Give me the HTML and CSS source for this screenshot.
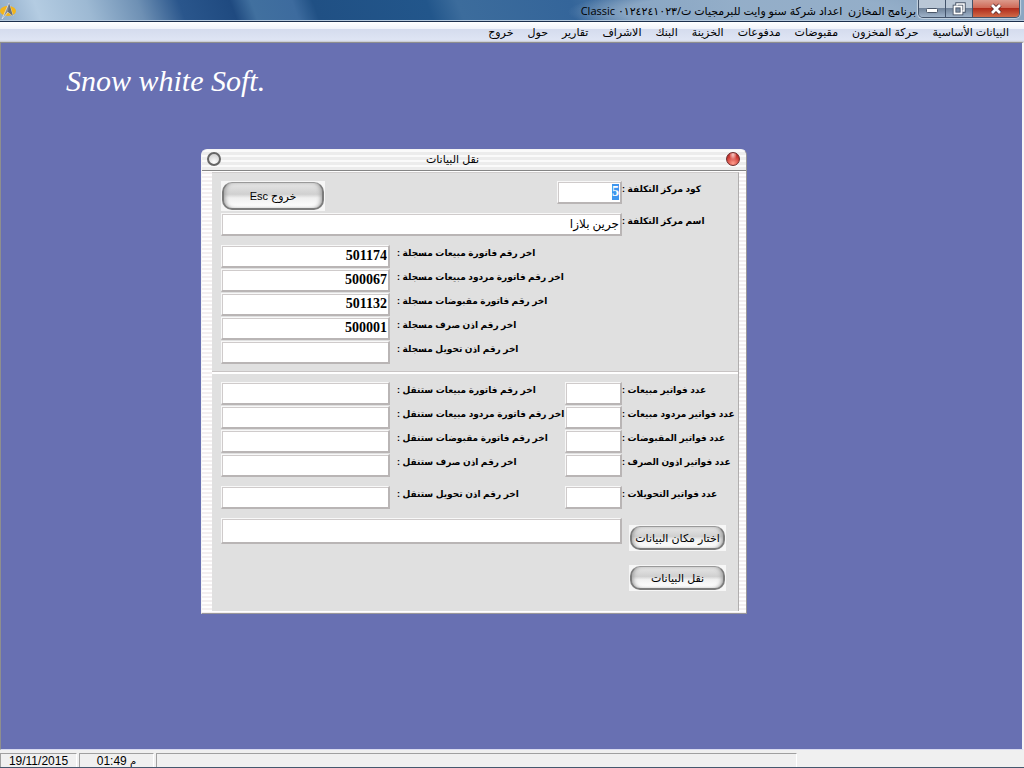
FILE: index.html
```
<!DOCTYPE html>
<html lang="ar" dir="rtl">
<head>
<meta charset="UTF-8">
<meta name="viewport" content="width=device-width, initial-scale=1.0">
<title>برنامج المخازن</title>
<link rel="stylesheet" href="styles.css">
</head>
<body>

<header class="titlebar">
    <div class="window-buttons">
        <button type="button" class="win-btn win-close" aria-label="Close">
            <svg width="14" height="12" viewBox="0 0 14 12"><path d="M3 2 L11 10 M11 2 L3 10" stroke="#5a2a2a" stroke-width="4.5"/><path d="M3 2 L11 10 M11 2 L3 10" stroke="#fff" stroke-width="2.8"/></svg>
        </button>
        <button type="button" class="win-btn win-restore" aria-label="Restore">
            <svg width="14" height="14" viewBox="0 0 14 14" fill="none"><path d="M5 3.5 V2 H12 V9 H10.5" stroke="#4a5668" stroke-width="3.4"/><rect x="2.5" y="4.5" width="7" height="7" stroke="#4a5668" stroke-width="3.6"/><path d="M5 3.5 V2 H12 V9 H10.5" stroke="#fff" stroke-width="1.5"/><rect x="2.5" y="4.5" width="7" height="7" stroke="#fff" stroke-width="1.8"/></svg>
        </button>
        <button type="button" class="win-btn win-min" aria-label="Minimize">
            <svg width="14" height="12" viewBox="0 0 14 12"><rect x="1.5" y="5.5" width="11" height="4" rx="1" fill="#fff" stroke="#4a5668"/></svg>
        </button>
    </div>
    <h1 class="app-title">برنامج المخازن &nbsp;اعداد شركة سنو وايت للبرمجيات ت/٠١٢٤٢٤١٠٢٣ Classic</h1>
    <svg class="app-icon" width="17" height="17" viewBox="0 0 17 17"><ellipse cx="8" cy="8" rx="8" ry="5" fill="#f3b51c"/><path d="M9 0 L13 13 L8 9 L2 16 Z" fill="#8a8f98" stroke="#e8ebf0" stroke-width=".7"/><path d="M9 0 L13 13 L8 9 Z" fill="#6a6f78"/></svg>
</header>

<nav class="menubar">
    <a href="#">البيانات الأساسية</a>
    <a href="#">حركة المخزون</a>
    <a href="#">مقبوضات</a>
    <a href="#">مدفوعات</a>
    <a href="#">الخزينة</a>
    <a href="#">البنك</a>
    <a href="#">الاشراف</a>
    <a href="#">تقارير</a>
    <a href="#">حول</a>
    <a href="#">خروج</a>
</nav>

<main class="workspace">
    <p class="brand" dir="ltr">Snow white Soft.</p>

    <section class="dialog">
        <div class="dialog-title">
            <button type="button" class="orb orb-red" aria-label="Close"></button>
            <h2>نقل البيانات</h2>
            <button type="button" class="orb" aria-label="Minimize"></button>
        </div>

        <form class="dialog-body">
            <div class="row center-row">
                <label for="centerCode">كود مركز التكلفة :</label>
                <input type="text" id="centerCode" class="code" value="5">
                <button type="button" class="pill pill-exit">خروج Esc</button>
            </div>
            <div class="row name-row">
                <label for="centerName">اسم مركز التكلفة :</label>
                <input type="text" id="centerName" class="name" value="جرين بلازا">
            </div>

            <div class="rows recorded">
                <div class="row">
                    <label for="lastSale">اخر رقم فاتورة مبيعات مسجلة :</label>
                    <input type="text" id="lastSale" value="501174">
                </div>
                <div class="row">
                    <label for="lastReturn">اخر رقم فاتورة مردود مبيعات مسجلة :</label>
                    <input type="text" id="lastReturn" value="500067">
                </div>
                <div class="row">
                    <label for="lastReceipt">اخر رقم فاتورة مقبوضات مسجلة :</label>
                    <input type="text" id="lastReceipt" value="501132">
                </div>
                <div class="row">
                    <label for="lastIssue">اخر رقم اذن صرف مسجلة :</label>
                    <input type="text" id="lastIssue" value="500001">
                </div>
                <div class="row">
                    <label for="lastTransfer">اخر رقم اذن تحويل مسجلة :</label>
                    <input type="text" id="lastTransfer">
                </div>
            </div>

            <hr>

            <div class="rows pending">
                <div class="row">
                    <label for="countSales">عدد فواتير مبيعات :</label>
                    <input type="text" id="countSales">
                    <label for="nextSale">اخر رقم فاتورة مبيعات ستنقل :</label>
                    <input type="text" id="nextSale">
                </div>
                <div class="row">
                    <label for="countReturns">عدد فواتير مردود مبيعات :</label>
                    <input type="text" id="countReturns">
                    <label for="nextReturn">اخر رقم فاتورة مردود مبيعات ستنقل :</label>
                    <input type="text" id="nextReturn">
                </div>
                <div class="row">
                    <label for="countReceipts">عدد فواتير المقبوضات :</label>
                    <input type="text" id="countReceipts">
                    <label for="nextReceipt">اخر رقم فاتورة مقبوضات ستنقل :</label>
                    <input type="text" id="nextReceipt">
                </div>
                <div class="row">
                    <label for="countIssues">عدد فواتير اذون الصرف :</label>
                    <input type="text" id="countIssues">
                    <label for="nextIssue">اخر رقم اذن صرف ستنقل :</label>
                    <input type="text" id="nextIssue">
                </div>
                <div class="row last">
                    <label for="countTransfers">عدد فواتير التحويلات :</label>
                    <input type="text" id="countTransfers">
                    <label for="nextTransfer">اخر رقم اذن تحويل ستنقل :</label>
                    <input type="text" id="nextTransfer">
                </div>
            </div>

            <div class="actions">
                <div class="action-buttons">
                    <button type="button" class="pill">اختار مكان البيانات</button>
                    <button type="button" class="pill">نقل البيانات</button>
                </div>
                <input type="text" class="path" aria-label="مكان البيانات">
            </div>
        </form>
    </section>
</main>

<footer class="statusbar" dir="ltr">
    <span class="cell date">19/11/2015</span>
    <span class="cell time">01:49 <small>م</small></span>
    <span class="cell message"></span>
</footer>

<script>
    // the code is selected when the window opens
    document.getElementById('centerCode').focus();
    document.getElementById('centerCode').select();
</script>
</body>
</html>
```
FILE: styles.css
```
* {
    box-sizing: border-box;
}

body {
    margin: 0;
    height: 100vh;
    display: flex;
    flex-direction: column;
    overflow: hidden;
    font-family: "Liberation Sans", "DejaVu Sans", sans-serif;
    font-size: 11px;
    color: #000;
    background-color: #f0f0f0;
}

button, input {
    font-family: inherit;
    font-size: inherit;
    color: inherit;
}

/* title bar */
.titlebar {
    display: flex;
    align-items: flex-start;
    flex: none;
    height: 22px;
    padding-right: 4px;
    border-bottom: 1px solid #1c2f4c;
    box-shadow: inset 0 -1px #b4c8dc;
    background:
        radial-gradient(ellipse 190px 26px at 74% 12px, rgba(150, 176, 202, 0.8) 70%, transparent),
        linear-gradient(70deg, #8fabc8 0, #b4cce2 4%, #9db9d3 9%, #6e90b4 14%, #2a568c 18%, #1f4a80 23%, #41709f 25%, #3d6b9e 29%, #205084 31%, #22568b 42%, #3c6c9c 45%, #34659a 56%, #8ba6c2 72%, #8ba6c2);
}

.window-buttons {
    display: flex;
    height: 18px;
    border: 1px solid #43536a;
    border-top: 0;
    border-radius: 0 0 5px 5px;
    overflow: hidden;
    box-shadow: 0 0 1px 1px rgba(255, 255, 255, 0.5);
}

.win-btn {
    display: flex;
    align-items: center;
    justify-content: center;
    width: 27px;
    padding: 0;
    border: 0;
    border-right: 1px solid #43536a;
    background: linear-gradient(#bac7d6 45%, #71839a 50%, #9fb3c9);
}

.win-close {
    width: 46px;
    border-right: 0;
    background: linear-gradient(#dc9a8c 0, #cf6a58 45%, #b02c1c 50%, #d06a48);
}

.app-title {
    flex: 1;
    margin: 0 2px 0 0;
    font-family: "Open Sans", "DejaVu Sans", sans-serif;
    font-size: 11px;
    font-weight: normal;
    line-height: 21px;
    white-space: nowrap;
}

.app-icon {
    flex: none;
    margin-top: 3px;
}

/* menu */
.menubar {
    display: flex;
    flex: none;
    gap: 14px;
    height: 20px;
    padding: 0 15px;
    line-height: 20px;
    background: linear-gradient(#fff 0, #f0f3fa 34%, #d5dcee 36%, #dfe5f4 92%, #b4b8c4 96%, #f4f4f4);
}

.menubar a {
    font-size: 11px;
    color: #000;
    text-decoration: none;
    white-space: nowrap;
}

/* desktop */
.workspace {
    position: relative;
    flex: 1;
    min-height: 0;
    border: 1px solid #8e8e8e;
    border-right: 2px solid #f4f4f8;
    border-bottom: 1px solid #d8daf0;
    background-color: #6870b2;
}

.brand {
    position: absolute;
    left: 65px;
    top: 20px;
    margin: 0;
    font-family: "Liberation Serif", serif;
    font-size: 30px;
    font-style: italic;
    line-height: 36px;
    color: #fff;
}

.dialog {
    position: absolute;
    left: 200px;
    top: 106px;
    width: 546px;
    border: 1px solid #99979a;
    border-left-color: #f4f4f4;
    border-top-color: #f4f4f4;
    border-radius: 6px 6px 0 0;
    background: repeating-linear-gradient(#fff 0, #fff 2px, #f3eff0 2px, #f3eff0 4px);
    overflow: hidden;
}

.dialog-title {
    display: flex;
    align-items: center;
    justify-content: space-between;
    height: 21px;
    padding: 0 6px 2px 5px;
    border-bottom: 1px solid #858585;
    background: repeating-linear-gradient(#fafafa 0, #fafafa 2px, #ececec 2px, #ececec 5px);
}

/* the caption sits left of the middle */
.dialog-title h2 {
    margin: 0;
    padding-right: 42px;
    font-size: 11px;
    font-weight: normal;
}

.orb {
    width: 14px;
    height: 14px;
    padding: 0;
    border: 2px solid #666;
    border-radius: 50%;
    background: radial-gradient(circle at 50% 80%, #fff, #c8c8c8);
}

.orb-red {
    border: 1px solid #6b2a2a;
    background: radial-gradient(ellipse at 50% 15%, #f6c8c4 0, #e07068 30%, transparent 45%), radial-gradient(circle at 50% 85%, #ff9c8c, #cc3a34 60%, #8e1818);
}

.dialog-body {
    margin: 1px 7px 2px 10px;
    padding: 8px 0 20px 9px;
    border-top: 1px solid #cfcccc;
    border-right: 1px solid #b0aeae;
    background-color: #e0e0e0;
}

.row {
    display: flex;
}

.row label {
    font-size: 9px;
    font-weight: bold;
    line-height: 16px;
    text-align: left;
    white-space: nowrap;
}

.dialog-body input {
    height: 23px;
    padding: 0 1px;
    border: 1px solid;
    border-color: #f8f8f8 #b9b5b5 #b9b5b5 #f8f8f8;
    border-width: 1px 2px 2px 1px;
    outline: 0;
    box-shadow: inset 1px 1px #cfcbcb;
    background-color: #fff;
    font-family: "Liberation Serif", "DejaVu Sans", serif;
    font-size: 14px;
    font-weight: bold;
    text-align: right;
}

.dialog-body input::selection {
    color: #fff;
    background-color: #3d95ee;
}

.center-row label,
.name-row label {
    width: 116px;
}

.center-row {
    height: 32px;
}

.dialog-body .code {
    width: 65px;
}

.dialog-body .name {
    flex: 1;
    min-width: 0;
    font-size: 12px;
    font-weight: normal;
}

.rows {
    display: flex;
    flex-direction: column;
    gap: 1px;
}

.recorded {
    margin-top: 9px;
}

.recorded .row label {
    flex: 1;
    padding-left: 7px;
}

.recorded .row input {
    width: 169px;
}

hr {
    height: 3px;
    margin: 7px 0 8px -9px;
    border: 0;
    border-top: 1px solid #c8c4c4;
    background-color: #fff;
}

.pending .row {
    display: grid;
    grid-template-columns: 116px 57px minmax(0, 1fr) 169px;
}

.pending .row label:nth-of-type(2) {
    padding-left: 7px;
}

.pending .last {
    margin-top: 8px;
}

.actions {
    display: flex;
    margin-top: 9px;
}

.action-buttons {
    display: flex;
    flex-direction: column;
    gap: 14px;
    padding: 7px 12px 0 7px;
    width: 116px;
}

.actions .path {
    flex: 1;
    min-width: 0;
    height: 26px;
}

/* glossy buttons sit on a white plate */
.pill {
    position: relative;
    z-index: 0;
    height: 26px;
    padding: 0;
    border: 0;
    background-color: #f6f6f6;
    font-size: 11px;
    white-space: nowrap;
}

.pill::before {
    content: "";
    position: absolute;
    z-index: -1;
    inset: 1px;
    border: 2px solid #7c7c7c;
    border-top: 1px solid #999;
    border-radius: 10px;
    background: linear-gradient(#e6e6e6, #d0d0d0 45%, #f0f0f0 60%, #fff);
    box-shadow: inset 3px 0 4px -2px #999, inset -3px 0 4px -2px #999;
}

.pill-exit {
    width: 104px;
    height: 30px;
    margin-right: auto;
}

/* status bar */
.statusbar {
    display: flex;
    flex: none;
    gap: 2px;
    height: 18px;
    padding-top: 3px;
    border-bottom: 1px solid #46586e;
    background-color: #f0f0f0;
}

.cell {
    border: 1px solid #a0a0a0;
    border-right-color: #fff;
    border-bottom: 0;
    font-size: 12px;
    line-height: 14px;
    text-align: center;
}

.date {
    width: 77px;
}

.time {
    width: 75px;
}

.time small {
    font-size: 10px;
}

.message {
    flex: 0 1 641px;
}
```
